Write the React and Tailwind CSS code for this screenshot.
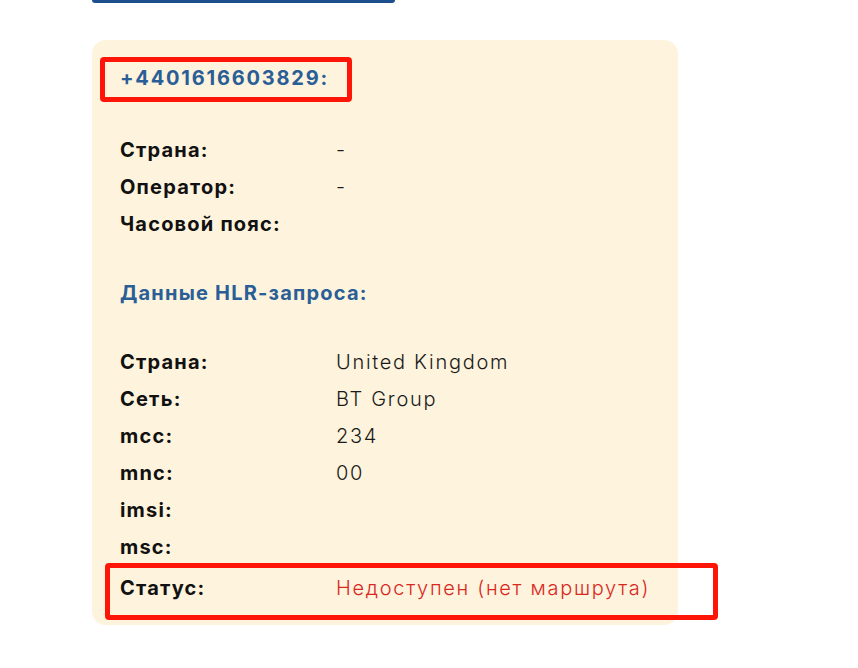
import React from "react";

const ff = { fontFamily: "Inter, 'Noto Sans', sans-serif" };

function Row({ label, value, valueClass = "text-[#1a1a1a]" }) {
  return (
    <div className="flex h-[37px] items-center">
      <div className="w-[216px] shrink-0 text-[20px] font-bold tracking-[1.2px] text-[#111]">{label}</div>
      <div className={`text-[20px] font-light tracking-[1.7px] ${valueClass}`}>{value}</div>
    </div>
  );
}

export default function App() {
  return (
    <div className="relative min-h-[668px] w-[858px] bg-white" style={ff}>
      <div className="pl-[92px]">
        <div className="h-[3px] w-[303px] rounded-b-[3px] bg-[#1d4f8f]" />
        <div className="mt-[37px] h-[585px] w-[586px] rounded-[14px] bg-[#fef3dc] pl-[28px] pt-[24px]">
          <div className="h-[28px] text-[20px] font-bold tracking-[1.8px] leading-[28px] text-[#2a5e97]">+4401616603829:</div>
          <div className="mt-[39px]">
            <Row label="Страна:" value="-" />
            <Row label="Оператор:" value="-" />
            <Row label="Часовой пояс:" value="" />
          </div>
          <div className="mt-[37px] h-[28px] text-[20px] font-bold tracking-[1.2px] leading-[28px] text-[#2a5e97]">Данные HLR-запроса:</div>
          <div className="mt-[36px]">
            <Row label="Страна:" value="United Kingdom" />
            <Row label="Сеть:" value="BT Group" />
            <Row label="mcc:" value="234" />
            <Row label="mnc:" value="00" />
            <Row label="imsi:" value="" />
            <Row label="msc:" value="" />
          </div>
          <div className="mt-[4px]">
            <Row label="Статус:" value="Недоступен (нет маршрута)" valueClass="text-[#d8281e]" />
          </div>
        </div>
      </div>
      <div className="absolute left-[100px] top-[57px] h-[45px] w-[252px] rounded-[4px] border-[5px] border-[#ff1408]" />
      <div className="absolute left-[105px] top-[563px] h-[57px] w-[613px] rounded-[4px] border-[5px] border-[#ff1408]" />
    </div>
  );
}
